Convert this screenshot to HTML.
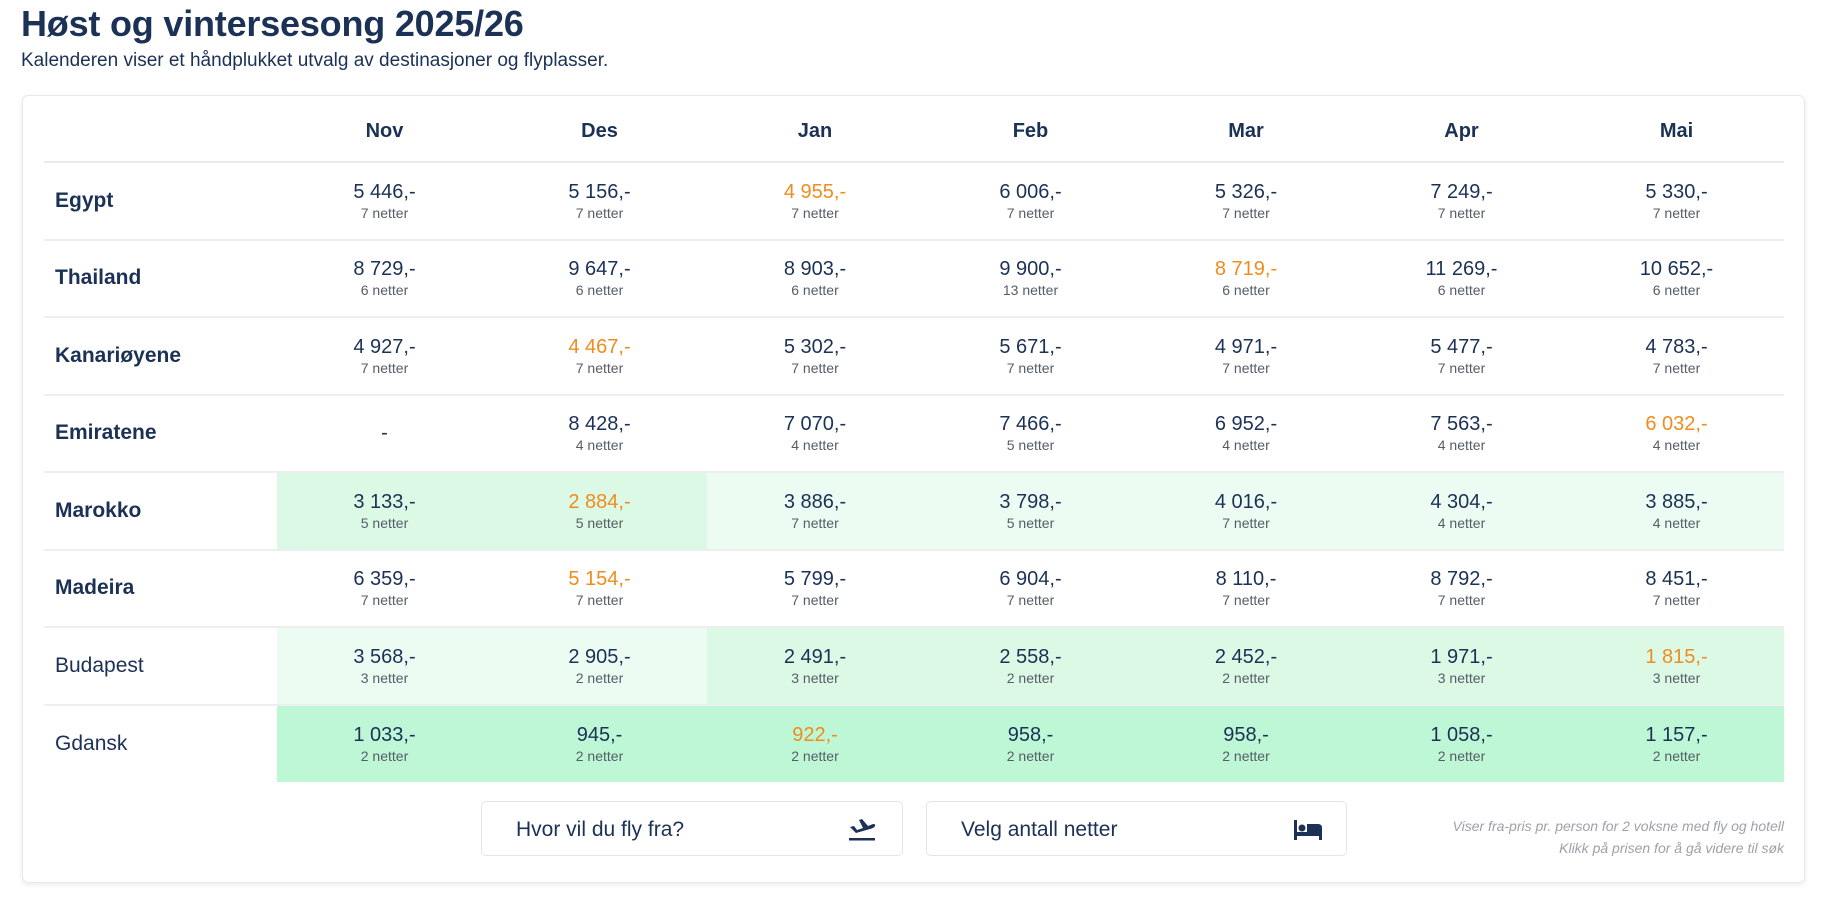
<!DOCTYPE html>
<html><head><meta charset="utf-8"><style>
*{margin:0;padding:0;box-sizing:border-box}
body{width:1835px;height:900px;background:#fff;font-family:"Liberation Sans",sans-serif;color:#1b3155;position:relative;overflow:hidden}
h1{position:absolute;left:21px;top:3px;font-size:36px;font-weight:bold;letter-spacing:-0.2px;color:#1b3155}
.sub{position:absolute;left:21px;top:50px;font-size:19px;color:#1b3155}
.card{position:absolute;left:22px;top:95px;width:1783px;height:788px;border:1px solid #e6e8ea;border-radius:6px;box-shadow:0 2px 6px rgba(0,0,0,0.08)}
table{position:absolute;left:44px;top:95px;width:1740px;border-collapse:collapse;table-layout:fixed}
th{height:67px;font-size:20px;font-weight:bold;text-align:center;border-bottom:2px solid #e8eaec;padding-top:6px}
td{height:77.5px;text-align:center;border-bottom:2px solid #eceeef;vertical-align:middle}
tr:last-child td{border-bottom:none}
td.l{text-align:left;padding-left:11px;font-size:21px;font-weight:bold}
td.n{font-weight:normal}
.p{font-size:20px;line-height:24px}
.o{color:#f08c1e}
.t{font-size:14px;color:#555d66;line-height:18px}
.g1{background:#dcf9e6}.g2{background:#edfcf2}.g3{background:#bdf7d6}
.btn{position:absolute;top:801px;height:55px;border:1px solid #e3e5e8;border-radius:5px;font-size:21px;padding:16px 0 0 34px;color:#1b3155}
.note{position:absolute;right:51px;top:815px;text-align:right;font-size:14px;font-style:italic;color:#9ca2aa;line-height:22px}
</style></head><body>
<h1>Høst og vintersesong 2025/26</h1>
<div class="sub">Kalenderen viser et håndplukket utvalg av destinasjoner og flyplasser.</div>
<div class="card"></div>
<table>
<colgroup><col style="width:233px"><col style="width:215px"><col style="width:215px"><col style="width:216px"><col style="width:215px"><col style="width:216px"><col style="width:215px"><col style="width:215px"></colgroup>
<tr><th></th><th>Nov</th><th>Des</th><th>Jan</th><th>Feb</th><th>Mar</th><th>Apr</th><th>Mai</th></tr>
<tr><td class="l">Egypt</td><td><div class="p">5 446,-</div><div class="t">7 netter</div></td><td><div class="p">5 156,-</div><div class="t">7 netter</div></td><td><div class="p o">4 955,-</div><div class="t">7 netter</div></td><td><div class="p">6 006,-</div><div class="t">7 netter</div></td><td><div class="p">5 326,-</div><div class="t">7 netter</div></td><td><div class="p">7 249,-</div><div class="t">7 netter</div></td><td><div class="p">5 330,-</div><div class="t">7 netter</div></td></tr>
<tr><td class="l">Thailand</td><td><div class="p">8 729,-</div><div class="t">6 netter</div></td><td><div class="p">9 647,-</div><div class="t">6 netter</div></td><td><div class="p">8 903,-</div><div class="t">6 netter</div></td><td><div class="p">9 900,-</div><div class="t">13 netter</div></td><td><div class="p o">8 719,-</div><div class="t">6 netter</div></td><td><div class="p">11 269,-</div><div class="t">6 netter</div></td><td><div class="p">10 652,-</div><div class="t">6 netter</div></td></tr>
<tr><td class="l">Kanariøyene</td><td><div class="p">4 927,-</div><div class="t">7 netter</div></td><td><div class="p o">4 467,-</div><div class="t">7 netter</div></td><td><div class="p">5 302,-</div><div class="t">7 netter</div></td><td><div class="p">5 671,-</div><div class="t">7 netter</div></td><td><div class="p">4 971,-</div><div class="t">7 netter</div></td><td><div class="p">5 477,-</div><div class="t">7 netter</div></td><td><div class="p">4 783,-</div><div class="t">7 netter</div></td></tr>
<tr><td class="l">Emiratene</td><td><div class="p">-</div></td><td><div class="p">8 428,-</div><div class="t">4 netter</div></td><td><div class="p">7 070,-</div><div class="t">4 netter</div></td><td><div class="p">7 466,-</div><div class="t">5 netter</div></td><td><div class="p">6 952,-</div><div class="t">4 netter</div></td><td><div class="p">7 563,-</div><div class="t">4 netter</div></td><td><div class="p o">6 032,-</div><div class="t">4 netter</div></td></tr>
<tr><td class="l">Marokko</td><td class="g1"><div class="p">3 133,-</div><div class="t">5 netter</div></td><td class="g1"><div class="p o">2 884,-</div><div class="t">5 netter</div></td><td class="g2"><div class="p">3 886,-</div><div class="t">7 netter</div></td><td class="g2"><div class="p">3 798,-</div><div class="t">5 netter</div></td><td class="g2"><div class="p">4 016,-</div><div class="t">7 netter</div></td><td class="g2"><div class="p">4 304,-</div><div class="t">4 netter</div></td><td class="g2"><div class="p">3 885,-</div><div class="t">4 netter</div></td></tr>
<tr><td class="l">Madeira</td><td><div class="p">6 359,-</div><div class="t">7 netter</div></td><td><div class="p o">5 154,-</div><div class="t">7 netter</div></td><td><div class="p">5 799,-</div><div class="t">7 netter</div></td><td><div class="p">6 904,-</div><div class="t">7 netter</div></td><td><div class="p">8 110,-</div><div class="t">7 netter</div></td><td><div class="p">8 792,-</div><div class="t">7 netter</div></td><td><div class="p">8 451,-</div><div class="t">7 netter</div></td></tr>
<tr><td class="l n">Budapest</td><td class="g2"><div class="p">3 568,-</div><div class="t">3 netter</div></td><td class="g2"><div class="p">2 905,-</div><div class="t">2 netter</div></td><td class="g1"><div class="p">2 491,-</div><div class="t">3 netter</div></td><td class="g1"><div class="p">2 558,-</div><div class="t">2 netter</div></td><td class="g1"><div class="p">2 452,-</div><div class="t">2 netter</div></td><td class="g1"><div class="p">1 971,-</div><div class="t">3 netter</div></td><td class="g1"><div class="p o">1 815,-</div><div class="t">3 netter</div></td></tr>
<tr><td class="l n">Gdansk</td><td class="g3"><div class="p">1 033,-</div><div class="t">2 netter</div></td><td class="g3"><div class="p">945,-</div><div class="t">2 netter</div></td><td class="g3"><div class="p o">922,-</div><div class="t">2 netter</div></td><td class="g3"><div class="p">958,-</div><div class="t">2 netter</div></td><td class="g3"><div class="p">958,-</div><div class="t">2 netter</div></td><td class="g3"><div class="p">1 058,-</div><div class="t">2 netter</div></td><td class="g3"><div class="p">1 157,-</div><div class="t">2 netter</div></td></tr>
</table>
<div class="btn" style="left:481px;width:422px">Hvor vil du fly fra?
<svg style="position:absolute;right:26px;top:16px" width="28" height="24" viewBox="0 0 28 24"><path d="M2 9 L6 8 L9 12 L15 10 L11 2 L14 1 L20 8 L25 6 Q28 6 27 8 Q26 10 22 11 L8 15 Z" fill="#1b3155"/><rect x="1" y="20" width="26" height="2.5" fill="#1b3155"/></svg></div>
<div class="btn" style="left:926px;width:421px">Velg antall netter
<svg style="position:absolute;right:22px;top:16px" width="32" height="24" viewBox="0 0 32 24"><rect x="2" y="2" width="3" height="20" fill="#1b3155"/><circle cx="10" cy="10" r="3.5" fill="#1b3155"/><path d="M15 6 H26 Q30 6 30 10 V22 H27 V18 H5 V14 H15 Z" fill="#1b3155"/></svg></div>
<div class="note">Viser fra-pris pr. person for 2 voksne med fly og hotell<br>Klikk på prisen for å gå videre til søk</div>
</body></html>
